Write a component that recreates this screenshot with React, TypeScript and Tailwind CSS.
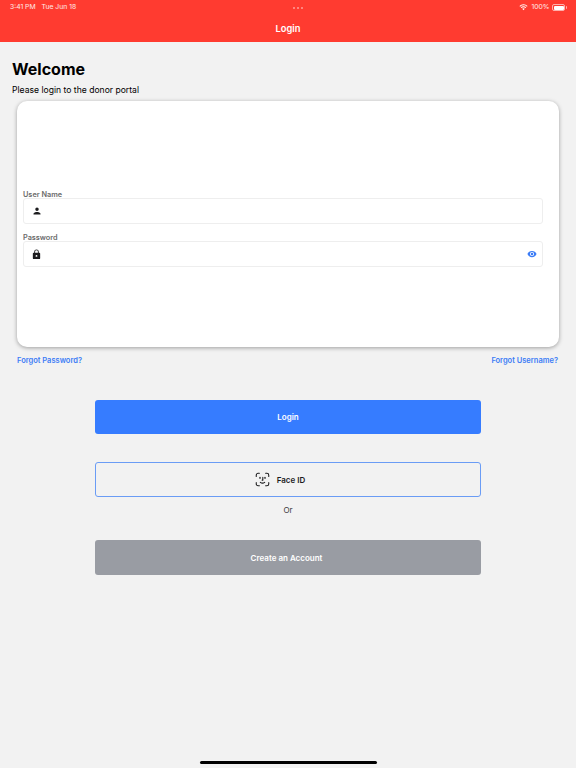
// App.tsx
import React from "react";

const font = { fontFamily: "Inter, 'Liberation Sans', sans-serif" };

const StatusBar: React.FC = () => (
  <div className="flex h-[15px] items-center justify-between pl-[10px] pr-[9px] text-[6.8px] leading-none text-white/90">
    <div className="flex gap-[6px]">
      <span>3:41 PM</span>
      <span>Tue Jun 18</span>
    </div>
    <div className="flex gap-[2px]">
      <span className="h-[2px] w-[2px] rounded-full bg-white/50" />
      <span className="h-[2px] w-[2px] rounded-full bg-white/50" />
      <span className="h-[2px] w-[2px] rounded-full bg-white/50" />
    </div>
    <div className="flex items-center gap-[3px]">
      <svg viewBox="0 0 16 12" className="h-[7px] w-[9px]" fill="white">
        <path d="M8 2.2c2.3 0 4.4.9 6 2.4l1.2-1.3A10.5 10.5 0 0 0 8 .4 10.5 10.5 0 0 0 .8 3.3L2 4.6a8.7 8.7 0 0 1 6-2.4Z" />
        <path d="M8 5.6c1.4 0 2.6.5 3.6 1.4l1.2-1.3A7 7 0 0 0 8 3.8a7 7 0 0 0-4.8 1.9L4.4 7c1-.9 2.2-1.4 3.6-1.4Z" />
        <path d="M8 7.4c-.9 0-1.7.3-2.3.9L8 11l2.3-2.7c-.6-.6-1.4-.9-2.3-.9Z" />
      </svg>
      <span>100%</span>
      <div className="flex items-center gap-[0.5px]">
        <div className="h-[7px] w-[13px] rounded-[2px] border border-white/60 p-[0.5px]">
          <div className="h-full w-full rounded-[1px] bg-white" />
        </div>
        <div className="h-[3px] w-[1px] rounded-r-full bg-white/60" />
      </div>
    </div>
  </div>
);

const PersonIcon: React.FC = () => (
  <svg viewBox="0 0 24 24" className="h-[10px] w-[10px]" fill="#1c1c1e">
    <path d="M12 12a4.2 4.2 0 1 0 0-8.4 4.2 4.2 0 0 0 0 8.4Zm0 2.1c-2.8 0-8.4 1.4-8.4 4.2v2.1h16.8v-2.1c0-2.8-5.6-4.2-8.4-4.2Z" />
  </svg>
);

const LockIcon: React.FC = () => (
  <svg viewBox="0 0 24 24" className="h-[11px] w-[11px]" fill="#1c1c1e">
    <path d="M18 8h-1V6A5 5 0 0 0 7 6v2H6a2 2 0 0 0-2 2v10c0 1.1.9 2 2 2h12a2 2 0 0 0 2-2V10a2 2 0 0 0-2-2Zm-6 9a2 2 0 1 1 0-4 2 2 0 0 1 0 4Zm3.1-9H8.9V6a3.1 3.1 0 0 1 6.2 0v2Z" />
  </svg>
);

const EyeIcon: React.FC = () => (
  <svg viewBox="0 0 24 24" className="h-[10px] w-[10px]" fill="#3b7cf6">
    <path d="M12 4.5C7 4.5 2.7 7.6 1 12c1.7 4.4 6 7.5 11 7.5s9.3-3.1 11-7.5c-1.7-4.4-6-7.5-11-7.5ZM12 17a5 5 0 1 1 0-10 5 5 0 0 1 0 10Zm0-8a3 3 0 1 0 0 6 3 3 0 0 0 0-6Z" />
  </svg>
);

const FaceIdIcon: React.FC = () => (
  <svg
    viewBox="0 0 24 24"
    className="h-[15px] w-[15px]"
    fill="none"
    stroke="#1c1c1e"
    strokeWidth="1.7"
    strokeLinecap="round"
    strokeLinejoin="round"
  >
    <path d="M2 7V5a3 3 0 0 1 3-3h2" />
    <path d="M17 2h2a3 3 0 0 1 3 3v2" />
    <path d="M22 17v2a3 3 0 0 1-3 3h-2" />
    <path d="M7 22H5a3 3 0 0 1-3-3v-2" />
    <path d="M8 8.5v2" />
    <path d="M16 8.5v2" />
    <path d="M12.5 8.5v4.5h-1" />
    <path d="M8.5 16.5c2 1.5 5 1.5 7 0" />
  </svg>
);

const App: React.FC = () => {
  return (
    <div className="flex h-[768px] w-[576px] flex-col overflow-hidden bg-[#f2f2f2]" style={font}>
      <header className="h-[42px] bg-[#ff3b30]">
        <StatusBar />
        <h1 className="text-center text-[9.3px] leading-[27px] font-semibold text-white">Login</h1>
      </header>

      <div className="px-3 pt-[16px]">
        <h2 className="text-[16px] leading-[22px] font-bold text-black">Welcome</h2>
        <p className="mt-[3px] text-[8.6px] leading-[14px] text-black">Please login to the donor portal</p>
      </div>

      <section className="mx-[17px] mt-[4px] flex h-[246px] flex-col rounded-[10px] bg-white pt-[90px] pr-[16px] pl-[6px] shadow-[0_1px_4px_rgba(0,0,0,0.35)]">
        <label className="text-[7.3px] leading-[7px] font-semibold text-[#6b6b6b]">User Name</label>
        <div className="flex h-[26px] items-center rounded-[3px] border border-[#eeeeee] pl-[8px]">
          <PersonIcon />
        </div>
        <label className="mt-[10px] text-[7.3px] leading-[7px] font-semibold text-[#6b6b6b]">Password</label>
        <div className="flex h-[26px] items-center justify-between rounded-[3px] border border-[#eeeeee] pr-[5px] pl-[7px]">
          <LockIcon />
          <EyeIcon />
        </div>
      </section>

      <div className="mt-[9px] mr-[18px] ml-[17px] flex justify-between text-[7.5px] leading-[10px] font-semibold text-[#3b7cf6]">
        <span>Forgot Password?</span>
        <span>Forgot Username?</span>
      </div>

      <div className="mx-[95px] mt-[34px] flex flex-col">
        <button className="flex h-[34px] items-center justify-center rounded-[3px] bg-[#367cff] text-[8px] font-semibold text-white">
          Login
        </button>
        <button className="mt-[28px] flex h-[35px] items-center justify-center gap-[7px] rounded-[3px] border border-[#6a9cf5] pr-[16px] text-[8px] font-semibold text-[#1c1c1e]">
          <FaceIdIcon />
          Face ID
        </button>
        <p className="mt-[7px] text-center text-[8px] leading-[12px] text-[#3a3a3c]">Or</p>
        <button className="mt-[24px] flex h-[35px] items-center justify-center rounded-[3px] bg-[#999ca3] pr-[3px] text-[8px] font-semibold text-white">
          Create an Account
        </button>
      </div>

      <div className="mt-auto mb-[4px] flex justify-center">
        <div className="h-[3px] w-[177px] rounded-full bg-black" />
      </div>
    </div>
  );
};

export default App;
